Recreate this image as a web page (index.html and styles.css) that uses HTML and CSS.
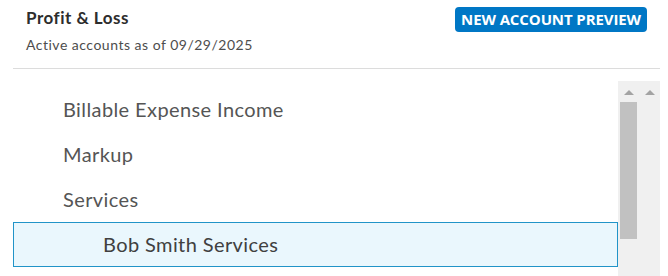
FILE: index.html
```html
<!DOCTYPE html>
<html lang="en">
<head>
    <meta charset="UTF-8">
    <title>Profit &amp; Loss</title>
    <link rel="stylesheet" href="styles.css">
</head>
<body>
    <div class="panel">
        <!-- header -->
        <div class="panel-head">
            <div class="head-text">
                <div class="title">Profit &amp; Loss</div>
                <div class="subtitle">Active accounts as of 09/29/2025</div>
            </div>
            <span class="badge">NEW ACCOUNT PREVIEW</span>
        </div>

        <!-- account list -->
        <div class="list-wrap">
            <ul class="account-list">
                <li class="account">Billable Expense Income</li>
                <li class="account">Markup</li>
                <li class="account">Services</li>
                <li class="account sub selected">Bob Smith Services</li>
            </ul>
            <div class="scrollbar">
                <div class="scroll-col">
                    <span class="arrow"></span>
                    <div class="thumb"></div>
                </div>
                <div class="scroll-col">
                    <span class="arrow"></span>
                </div>
            </div>
        </div>
    </div>
</body>
</html>
```

FILE: styles.css
```css
body {
    margin: 0;
    background: #fff;
    font-family: Lato, "Open Sans", sans-serif;
    color: #393a3d;
}
.panel {
    width: 668px;
    height: 276px;
    overflow: hidden;
}
.panel-head {
    display: flex;
    justify-content: space-between;
    align-items: flex-start;
    margin: 0 8px 0 13px;
    padding: 7px 13px 0 13px;
    height: 61px;
    border-bottom: 1px solid #dcdcdc;
}
.title {
    font-size: 17px;
    font-weight: 700;
    letter-spacing: 0.5px;
    color: #2d2d2d;
    line-height: 22px;
}
.subtitle {
    margin-top: 7px;
    font-size: 14px;
    letter-spacing: 0.5px;
    color: #4d4d4d;
    line-height: 18px;
}
.badge {
    background: #0077c5;
    color: #fff;
    font-family: "Open Sans", sans-serif;
    font-size: 15px;
    font-weight: 700;
    letter-spacing: -0.1px;
    line-height: 25px;
    padding: 0 6px;
    border-radius: 4px;
}
.list-wrap {
    display: flex;
    padding-top: 12px;
}
.account-list {
    list-style: none;
    margin: 6px 0 0 13px;
    padding: 0;
    width: 605px;
}
.account {
    height: 45px;
    line-height: 45px;
    padding-left: 50px;
    font-size: 20px;
    letter-spacing: 0.4px;
    color: #555;
    box-sizing: border-box;
}
.account.sub {
    padding-left: 89px;
}
.selected {
    background: #eaf7fd;
    border: 1px solid #2194c8;
    line-height: 42px;
    height: 45px;
    color: #404040;
}
.scrollbar {
    display: flex;
    width: 42px;
    height: 200px;
    background: #f0f0f0;
}
.scroll-col {
    width: 21px;
    display: flex;
    flex-direction: column;
    align-items: center;
}
.arrow {
    margin-top: 9px;
    width: 0;
    height: 0;
    border-left: 5px solid transparent;
    border-right: 5px solid transparent;
    border-bottom: 5px solid #a3a3a3;
}
.thumb {
    margin-top: 7px;
    width: 17px;
    height: 137px;
    background: #c1c1c1;
}
```
